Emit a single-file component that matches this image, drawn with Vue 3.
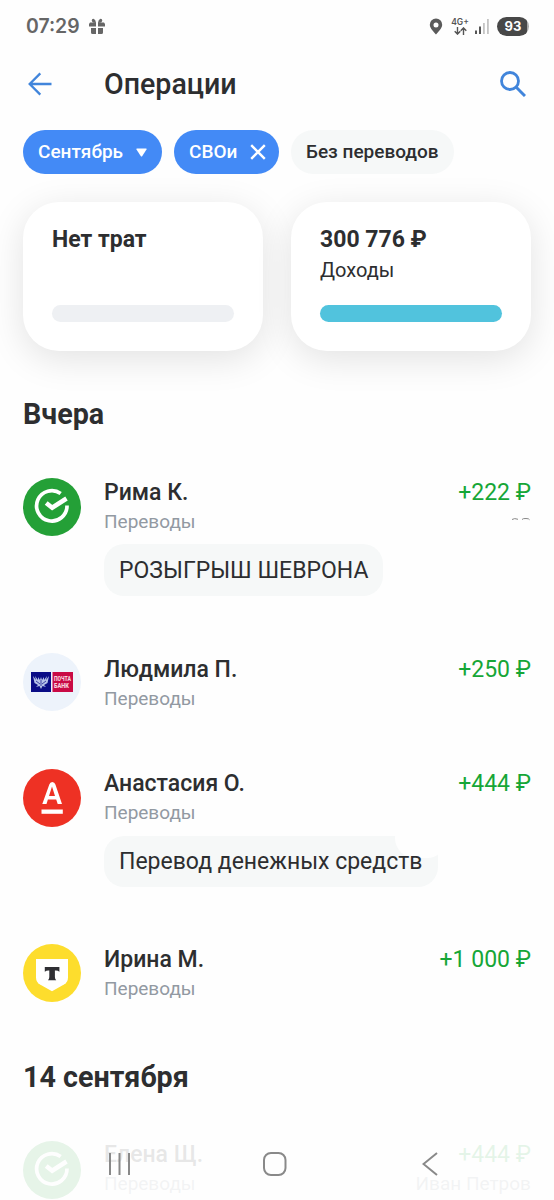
<script setup>
const yesterday = [
  { name: 'Рима К.', amount: '+222 ₽', bank: 'sber', note: 'РОЗЫГРЫШ ШЕВРОНА', noteClass: 'note-caps', trace: true },
  { name: 'Людмила П.', amount: '+250 ₽', bank: 'pochta' },
  { name: 'Анастасия О.', amount: '+444 ₽', bank: 'alfa', note: 'Перевод денежных средств', noteClass: 'note-cut' },
  { name: 'Ирина М.', amount: '+1 000 ₽', bank: 'tbank' },
]
const earlier = [{ name: 'Елена Щ.', amount: '+444 ₽', bank: 'sber', owner: 'Иван Петров' }]
const groups = [
  { title: 'Вчера', cls: 'first', rows: yesterday },
  { title: '14 сентября', cls: 'second', rows: earlier },
]
</script>

<template>
  <div class="screen">
    <div class="status">
      <span class="clock">07:29</span>
      <svg class="gift" width="16" height="17" viewBox="0 0 16 17" fill="#666">
        <path d="M1 4.500h6v4H0V6zM9 4.500h6L16 6v2.500H9zM2 10h5v6H3.500Q2 16 2 14.500zM9 10h5v4.500Q14 16 12.500 16H9z" />
        <path d="M7 5Q3 5 2.700 2.500Q3 .3 5 1Q6.800 2 7 5zM9 5Q13 5 13.300 2.500Q13 .3 11 1Q9.200 2 9 5z" />
      </svg>
      <span class="grow"></span>
      <svg class="pin" width="14" height="17" viewBox="0 0 14 17" fill="#5a5a5a">
        <path fill-rule="evenodd" d="M7 .5a6.200 6.200 0 0 1 6.200 6.200C13.200 10.500 8.500 14.500 7 16.500C5.500 14.500.8 10.500.8 6.700A6.200 6.200 0 0 1 7 .5zM7 4.400a2.500 2.500 0 1 0 0 5a2.500 2.500 0 0 0 0-5z" />
      </svg>
      <span class="net">
        <span class="net-label">4G+</span>
        <svg width="13" height="8" viewBox="0 0 13 8" fill="none" stroke="#555" stroke-width="1.400">
          <path d="M3.500 0v7M.7 4.200l2.800 2.900l2.800-2.900M9.500 8V1M6.700 3.800L9.500.9l2.800 2.900" />
        </svg>
      </span>
      <svg class="signal" width="14" height="15" viewBox="0 0 14 15">
        <path d="M0 11.500h2V15H0zM4 7.500h2V15H4z" fill="#555" />
        <path d="M8 4h1.800v11H8zM12 0h1.800v15H12z" fill="#c4c4c4" />
      </svg>
      <span class="battery">93</span>
    </div>

    <header class="bar">
      <svg class="back" width="24" height="24" viewBox="0 0 24 24" fill="none" stroke="#4185db" stroke-width="2.300">
        <path d="M23.500 12H1.800M12.300 1.400L1.700 12l10.600 10.600" />
      </svg>
      <h1>Операции</h1>
      <span class="grow"></span>
      <svg class="search" width="26" height="26" viewBox="0 0 26 26" fill="none" stroke="#4185db">
        <circle cx="10" cy="10" r="8.500" stroke-width="2.800" />
        <path d="M16 16L25 25" stroke-width="3" />
      </svg>
    </header>

    <div class="chips">
      <button class="chip month"><span class="chip-label">Сентябрь</span>
        <svg width="11" height="9" viewBox="0 0 11 9"><path d="M1 .5h9q1 0 .5 1L6.300 8q-.8 1-1.600 0L.5 1.500Q0 .5 1 .5z" fill="#fff" /></svg>
      </button>
      <button class="chip tag"><span class="chip-label">СВОи</span>
        <svg width="16" height="16" viewBox="0 0 16 16"><path d="M1.200 1.200l13.600 13.600M14.800 1.200L1.200 14.800" stroke="#fff" stroke-width="2.400" /></svg>
      </button>
      <button class="chip plain"><span class="chip-label">Без переводов</span></button>
    </div>

    <div class="cards">
      <div class="card">
        <strong class="spend">Нет трат</strong>
        <div class="meter"></div>
      </div>
      <div class="card">
        <strong class="income">300 776 ₽</strong>
        <span class="caption">Доходы</span>
        <div class="meter full"></div>
      </div>
    </div>

    <section v-for="g in groups" :key="g.title" :class="['group', g.cls]">
      <h2>{{ g.title }}</h2>
      <div class="rows">
        <article v-for="r in g.rows" :key="r.name" :class="['row', { compact: !r.note && !r.owner }]">
          <svg class="avatar" width="58" height="58" viewBox="0 0 58 58">
            <template v-if="r.bank === 'sber'">
              <circle cx="29" cy="29" r="29" fill="#24a037" />
              <path d="M37.700 15.500A15.200 15.200 0 1 0 44 27.500" fill="none" stroke="#fff" stroke-width="3.700" />
              <path d="M23.200 25L29.200 29.700L43.500 20.500" fill="none" stroke="#fff" stroke-width="4.600" />
            </template>
            <template v-else-if="r.bank === 'pochta'">
              <circle cx="29" cy="29" r="29" fill="#edf3fb" />
              <path d="M8 19h20v20H8z" fill="#0a0c86" />
              <path d="M29.500 19H50v20H29.500z" fill="#c90a45" />
              <path d="M10 23l3 4l-1-4l3 4v-3l2 3l1-3l1 3l2-3v3l3-4l-1 4l3-4l-1.500 7l-3.500 2l2 2l-3.500-1l-1.500 3l-1.500-3l-3.500 1l2-2l-3.500-2z" fill="#b5c1e8" />
              <path d="M13 28l4 3M23 28l-4 3M18 27v6" stroke="#0a0c86" stroke-width=".7" />
              <text x="31" y="27.500" class="post" textLength="17" lengthAdjust="spacingAndGlyphs">ПОЧТА</text>
              <text x="31" y="34.500" class="post" textLength="15" lengthAdjust="spacingAndGlyphs">БАНК</text>
            </template>
            <template v-else-if="r.bank === 'alfa'">
              <circle cx="29" cy="29" r="29" fill="#ee3124" />
              <path fill-rule="evenodd" d="M26.300 15.500Q27 13 29.300 13Q31.600 13 32.400 15.500L39 35H34.700L33.200 30.500H24.900L23.500 35H19.300zM29 17.500L26 27H32z" fill="#fff" />
              <path d="M18.500 40.500h21.300v4.300H18.500z" fill="#fff" />
            </template>
            <template v-else>
              <circle cx="29" cy="29" r="29" fill="#fddd2d" />
              <path d="M13 15h32v18.500Q45 38 41 40.500L29 47.300L17 40.500Q13 38 13 33.500z" fill="#fff" />
              <path d="M21.800 23h14.600v4.800q-1.500-1.400-3.500-1.400h-1V33q0 1.800 1.300 3.200h-8.200q1.300-1.400 1.300-3.200v-6.600h-1q-2 0-3.500 1.400z" fill="#2f2f33" />
            </template>
          </svg>
          <div class="info">
            <div class="line">
              <span class="name">{{ r.name }}</span>
              <span class="amount">{{ r.amount }}</span>
            </div>
            <div class="line sub">
              <span class="category">Переводы</span>
              <span v-if="r.owner" class="owner">{{ r.owner }}</span>
              <svg v-if="r.trace" class="trace" width="20" height="4" viewBox="0 0 20 4" fill="none" stroke="#888" stroke-width="1">
                <path d="M1 2.500Q3.500 .8 7 2.300M11 2.500Q12 1.300 15 1.500Q18 1.500 18.500 2.700" />
              </svg>
            </div>
            <div v-if="r.note" :class="['note', r.noteClass]"><span>{{ r.note }}</span></div>
          </div>
        </article>
      </div>
    </section>

    <nav class="system">
      <svg width="22" height="24" viewBox="0 0 22 24" fill="none" stroke="#898989" stroke-width="2">
        <path d="M2 1v22M11.500 1v22M21 1v22" />
      </svg>
      <svg class="home" width="24" height="24" viewBox="0 0 24 24" fill="none" stroke="#898989" stroke-width="2">
        <rect x="1" y="1" width="21.500" height="22" rx="7" />
      </svg>
      <svg width="16" height="24" viewBox="0 0 16 24" fill="none" stroke="#898989" stroke-width="2">
        <path d="M15 1L1.500 12L15 23" />
      </svg>
    </nav>
  </div>
</template>

<style>
body { margin: 0; background: #fff; }
</style>

<style scoped>
.screen { position: relative; width: 554px; height: 1200px; overflow: hidden; box-sizing: border-box; background: #fefefe; color: #2d2e30; font-family: Roboto, "Noto Sans", sans-serif; }
.grow { flex: 1; }
svg { display: block; flex: none; }
.status { height: 52px; padding: 0 25px 0 26px; display: flex; align-items: center; }
.clock { font-family: Inter, Roboto, sans-serif; font-weight: 600; font-size: 19.4px; color: #666; width: 54px; white-space: nowrap; }
.gift { margin-left: 9px; }
.pin { margin-right: 8px; }
.net { width: 18px; display: flex; flex-direction: column; align-items: center; margin-right: 6px; }
.net-label { font: 600 8.5px/9px Inter, sans-serif; color: #555; }
.signal { margin-right: 8px; }
.battery { width: 32px; height: 19px; border-radius: 10px; background: linear-gradient(90deg, #484848 93%, #aaa 93%); color: #fff; font: 700 13px/19px Inter, sans-serif; text-align: center; }
.bar { height: 64px; padding: 0 28px; display: flex; align-items: center; }
h1 { margin: 0 0 0 52px; font-size: 28.6px; line-height: 36px; font-weight: 500; }
.chips { margin-top: 14px; padding: 0 23px; display: flex; gap: 12px; position: relative; z-index: 1; }
.chip { height: 44px; border: 0; border-radius: 22px; padding: 0 15px; display: flex; align-items: center; justify-content: space-between; box-sizing: border-box; background: #438af6; color: #fff; font: 500 19px/24px Roboto, sans-serif; white-space: nowrap; }
.month { width: 139px; }
.tag { width: 105px; padding-right: 13px; }
.plain { width: 163px; background: #f6f8f8; color: #2d2e30; }
.cards { margin-top: 28px; padding: 0 23px; display: grid; grid-template-columns: 240px 240px; gap: 28px; }
.card { height: 149px; box-sizing: border-box; padding: 24px 29px 29px; border-radius: 36px; background: #fff; box-shadow: 0 8px 36px rgba(0, 0, 0, .115); display: flex; flex-direction: column; align-items: flex-start; }
.card strong { font-size: 23px; line-height: 28px; font-weight: 700; }
.caption { margin-top: 4px; font-size: 20px; line-height: 24px; }
.meter { width: 182px; height: 17px; border-radius: 9px; background: #eef0f3; margin-top: auto; }
.meter.full { background: #51c3dd; }
h2 { margin: 0; font-size: 28.7px; line-height: 36px; font-weight: 700; }
.group { padding: 0 23px; }
.first { margin-top: 45px; }
.second { margin-top: 57px; }
.rows { margin-top: 46px; display: flex; flex-direction: column; gap: 57.3px; }
.row { display: flex; gap: 23px; }
.info { flex: 1; min-width: 0; }
.compact .info { padding-top: 2px; height: 56px; }
.line { height: 28px; display: flex; justify-content: space-between; align-items: center; white-space: nowrap; }
.name { font-size: 23px; font-weight: 500; }
.amount { font-size: 23px; color: #16a637; }
.sub { height: 24px; margin-top: 3px; color: #9299a2; font-size: 19px; }
.trace { align-self: flex-start; margin-top: 8px; }
.note { width: 279px; height: 52px; margin-top: 11px; box-sizing: border-box; padding: 1px 15px 0; border-radius: 20px; background: #f6f8f8; font-size: 23px; line-height: 52px; white-space: nowrap; position: relative; }
.row:nth-child(3) .info { padding-top: 1px; }
.note-cut { width: 334px; height: 51px; padding-top: 0; }
.note-cut::before { content: ""; position: absolute; top: -18px; right: -9px; width: 52px; height: 40px; border-radius: 20px; background: #fefefe; }
.note span { position: relative; }
.post { font: 900 6.5px Roboto, sans-serif; fill: #f6d3de; }
.system { position: absolute; left: 0; right: 0; bottom: 0; height: 72px; box-sizing: border-box; padding: 0 116px 0 108px; display: flex; justify-content: space-between; align-items: center; background: rgba(254, 254, 254, .89); }
.home { margin-right: 2px; }
</style>
